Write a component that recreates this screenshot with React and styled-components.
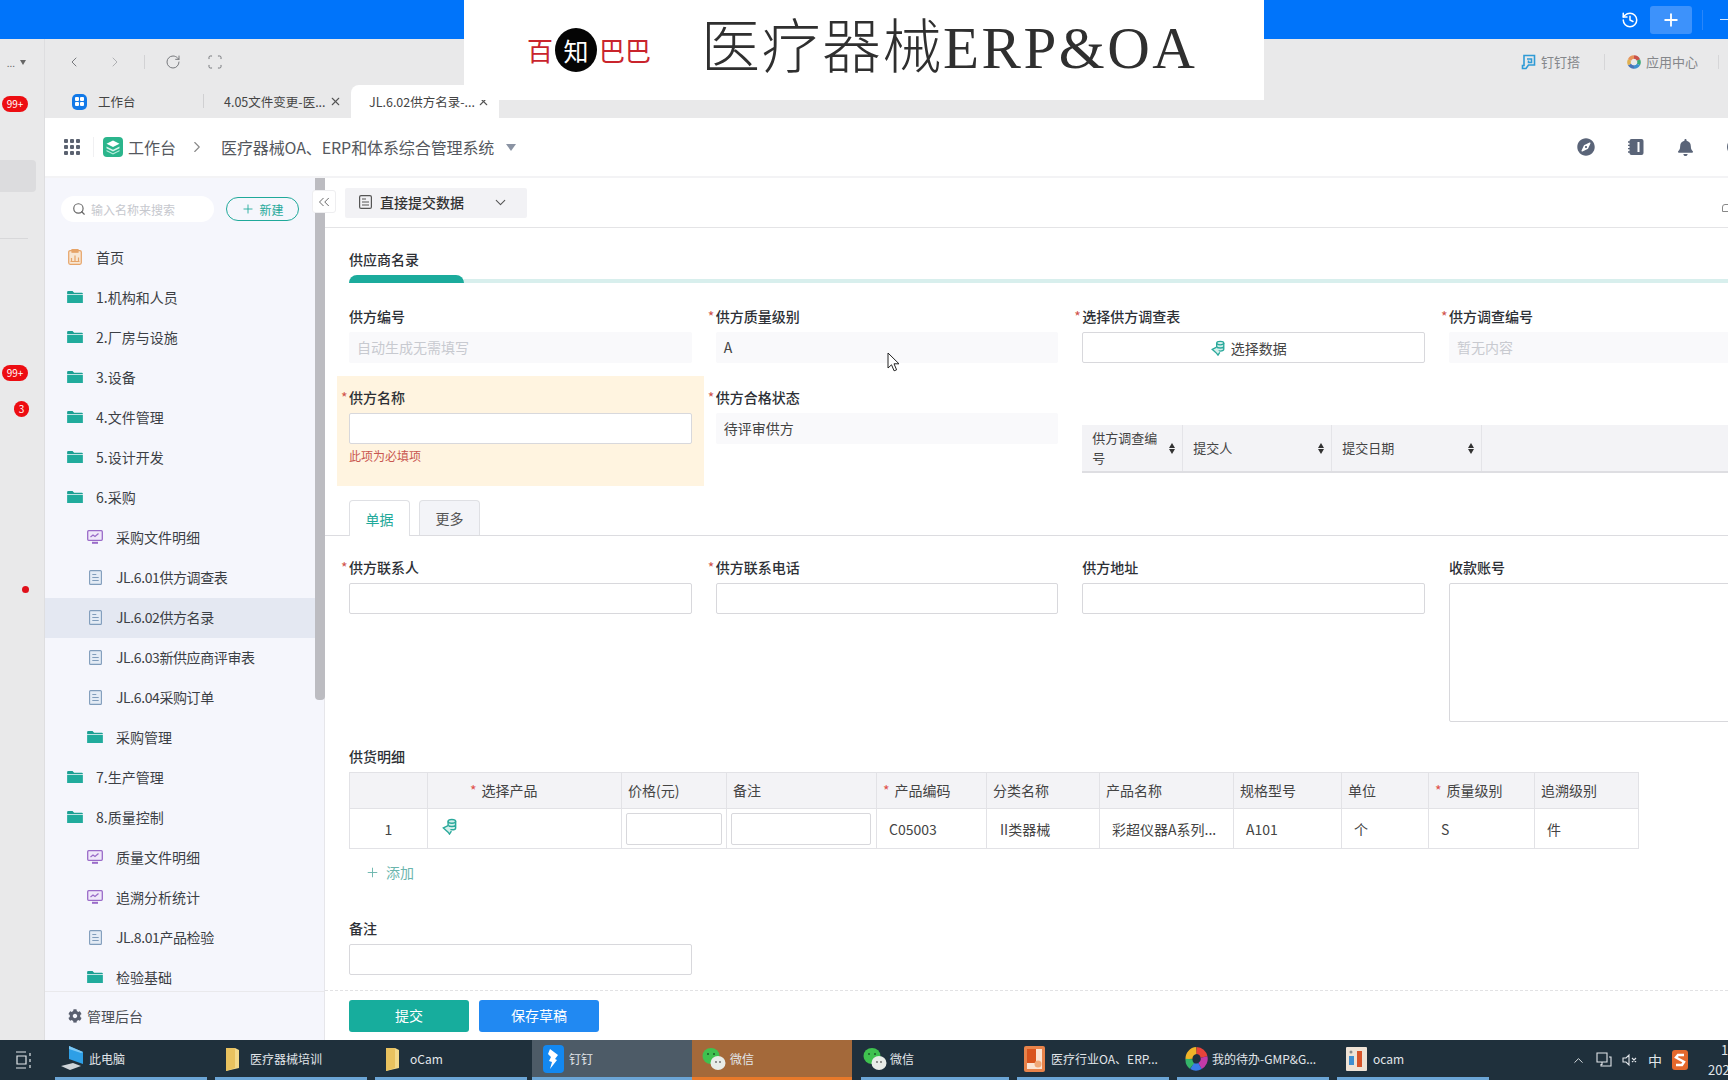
import React from "react";
import styled, { createGlobalStyle } from "styled-components";
import { ChevronLeft, ChevronRight, ChevronDown, ChevronsLeft, RotateCw, Scan, History, Plus, Search, X, ChevronUp } from "lucide-react";
import { FaCompass, FaBell, FaCog } from "react-icons/fa";

const GlobalStyle = createGlobalStyle`
  html, body { margin: 0; padding: 0; background: #fff; overflow: hidden; }
  * { box-sizing: border-box; }
  body { font-family: "Noto Sans CJK SC", "Noto Sans", sans-serif; color: #333; }
`;

const menu = [
  { type: "home", text: "首页" },
  { type: "folder", text: "1.机构和人员" },
  { type: "folder", text: "2.厂房与设施" },
  { type: "folder", text: "3.设备" },
  { type: "folder", text: "4.文件管理" },
  { type: "folder", text: "5.设计开发" },
  { type: "folder", text: "6.采购" },
  { type: "screen", text: "采购文件明细", child: true },
  { type: "doc", text: "JL.6.01供方调查表", child: true },
  { type: "doc", text: "JL.6.02供方名录", child: true, active: true },
  { type: "doc", text: "JL.6.03新供应商评审表", child: true },
  { type: "doc", text: "JL.6.04采购订单", child: true },
  { type: "folder", text: "采购管理", child: true },
  { type: "folder", text: "7.生产管理" },
  { type: "folder", text: "8.质量控制" },
  { type: "screen", text: "质量文件明细", child: true },
  { type: "screen", text: "追溯分析统计", child: true },
  { type: "doc", text: "JL.8.01产品检验", child: true },
  { type: "folder", text: "检验基础", child: true },
];

const columns = [
  { w: 78, title: "" },
  { w: 194, title: "选择产品", req: true, pad: 42 },
  { w: 105, title: "价格(元)" },
  { w: 150, title: "备注" },
  { w: 110, title: "产品编码", req: true },
  { w: 113, title: "分类名称" },
  { w: 134, title: "产品名称" },
  { w: 108, title: "规格型号" },
  { w: 87, title: "单位" },
  { w: 106, title: "质量级别", req: true },
  { w: 104, title: "追溯级别" },
];

const tasks = [
  { w: 152, text: "此电脑", icon: "pc", pad: 5, gap: 4 },
  { w: 152, text: "医疗器械培训", icon: "dir", pad: 9, gap: 10 },
  { w: 152, text: "oCam", icon: "dir", pad: 9, gap: 10 },
  { w: 160, text: "钉钉", icon: "ding", pad: 11, gap: 5, state: "gray" },
  { w: 160, text: "微信", icon: "wechat", pad: 10, gap: 4, state: "orange" },
  { w: 148, text: "微信", icon: "wechat", pad: 2, gap: 3 },
  { w: 152, text: "医疗行业OA、ERP...", icon: "ppt", pad: 7, gap: 6 },
  { w: 152, text: "我的待办-GMP&G...", icon: "wheel", pad: 8, gap: 4 },
  { w: 152, text: "ocam", icon: "cam", pad: 9, gap: 6 },
];

const Page = styled.div`
  position: relative;
  width: 1728px;
  height: 1080px;
  overflow: hidden;
  display: flex;
  flex-direction: column;
  font-size: 14px;
`;

const BlueBar = styled.div`
  height: 39px;
  flex: none;
  background: #0074fa;
  display: flex;
  align-items: center;
  justify-content: flex-end;
  color: #fff;
`;

const PlusBox = styled.div`
  width: 42px;
  height: 28px;
  margin-left: 11px;
  border-radius: 3px;
  background: #3d92fb;
  display: flex;
  align-items: center;
  justify-content: center;
`;

const BlueSep = styled.div`
  width: 1px;
  height: 20px;
  margin-left: 10px;
  background: #2a86f8;
`;

const MinusMark = styled.div`
  width: 8px;
  height: 1px;
  margin-left: 17px;
  background: #d6e8ff;
`;

const Middle = styled.div`
  flex: 1;
  min-height: 0;
  display: flex;
`;

const Rail = styled.div`
  width: 45px;
  flex: none;
  background: #e9e9ea;
  border-right: 1px solid #dedee0;
  display: flex;
  flex-direction: column;
  align-items: flex-start;
`;

const RailTop = styled.div`
  height: 46px;
  width: 100%;
  padding-right: 18px;
  display: flex;
  align-items: center;
  justify-content: flex-end;
  gap: 5px;
  font-size: 10px;
  color: #666;
`;

const Caret = styled.span`
  width: 0;
  height: 0;
  border-left: 3px solid transparent;
  border-right: 3px solid transparent;
  border-top: 5px solid ${(p) => p.$color || "#666"};
`;

const BigCaret = styled(Caret)`
  border-left-width: 5px;
  border-right-width: 5px;
  border-top-width: 7px;
`;

const Badge = styled.div`
  margin-top: ${(p) => p.$top}px;
  margin-left: ${(p) => p.$left}px;
  min-width: ${(p) => p.$w}px;
  height: 16px;
  border-radius: 8px;
  background: #ed0d12;
  color: #fff;
  font-size: 10px;
  line-height: 16px;
  text-align: center;
`;

const RailBlock = styled.div`
  width: 36px;
  height: 32px;
  margin-top: 48px;
  background: #dcdcde;
  border-radius: 0 4px 4px 0;
`;

const RailLine = styled.div`
  width: 28px;
  height: 1px;
  margin-top: 46px;
  background: #d8d8da;
`;

const RailDot = styled.div`
  width: 7px;
  height: 7px;
  margin-top: 169px;
  margin-left: 22px;
  border-radius: 50%;
  background: #e0101a;
`;

const Browser = styled.div`
  flex: 1;
  min-width: 0;
  display: flex;
  flex-direction: column;
`;

const NavBar = styled.div`
  height: 46px;
  flex: none;
  background: #e9e9ea;
  display: flex;
  align-items: center;
  padding-left: 21px;
  color: #77797d;
`;

const NavBtn = styled.div`
  width: ${(p) => p.$w || 16}px;
  margin-right: ${(p) => p.$mr || 0}px;
  display: flex;
  justify-content: center;
  opacity: ${(p) => (p.$dim ? 0.5 : 1)};
`;

const NavSep = styled.div`
  width: 1px;
  height: 14px;
  margin-right: 20px;
  background: #d2d2d4;
`;

const NavRight = styled.div`
  margin-left: auto;
  display: flex;
  align-items: center;
  font-size: 13px;
  color: #85878b;
`;

const NavLink = styled.div`
  display: flex;
  align-items: center;
  gap: 5px;
  padding-right: ${(p) => p.$pr}px;
  margin-right: ${(p) => p.$mr}px;
  border-right: 1px solid #d6d6d8;
  line-height: 14px;
`;

const TabBar = styled.div`
  height: 33px;
  flex: none;
  background: #e9e9ea;
  display: flex;
  align-items: stretch;
  padding-left: 27px;
  font-size: 12.5px;
  color: #444;
`;

const Tab = styled.div`
  width: ${(p) => p.$w}px;
  flex: none;
  display: flex;
  align-items: center;
  padding-left: ${(p) => p.$pl}px;
  background: ${(p) => (p.$active ? "#fff" : "transparent")};
  border-radius: ${(p) => (p.$active ? "8px 8px 0 0" : "0")};
  white-space: nowrap;
  svg.close {
    margin-left: auto;
    margin-right: ${(p) => p.$cr || 0}px;
    color: #555;
  }
`;

const TabSep = styled.div`
  width: 1px;
  height: 14px;
  margin: 9px 20px 0 0;
  background: #d0d0d2;
`;

const TabIconBox = styled.div`
  width: 15px;
  height: 16px;
  margin-right: 11px;
  border-radius: 5px;
  background: #1279e8;
  display: grid;
  grid-template-columns: 4px 4px;
  gap: 1px;
  align-content: center;
  justify-content: center;
  i {
    display: block;
    width: 4px;
    height: 4px;
    border-radius: 1px;
    background: #fff;
  }
`;

const AppHeader = styled.div`
  height: 60px;
  flex: none;
  background: #fff;
  border-bottom: 2px solid #f3f3f5;
  display: flex;
  align-items: center;
  padding-left: 19px;
  color: #55585e;
  font-size: 16px;
`;

const DotGrid = styled.div`
  width: 16px;
  height: 16px;
  display: grid;
  grid-template-columns: repeat(3, 4px);
  grid-auto-rows: 4px;
  gap: 2px;
  i {
    background: #5b6270;
    border-radius: 1px;
  }
`;

const HeaderSep = styled.div`
  width: 1px;
  height: 20px;
  margin: 0 9px 0 13px;
  background: #f0f0f2;
`;

const AppTitle = styled.span`
  margin-left: 5px;
  white-space: nowrap;
`;

const Crumb = styled.span`
  margin-left: 12px;
  display: flex;
  color: #888;
`;

const SysTitle = styled.span`
  margin-left: 15px;
  margin-right: 12px;
  white-space: nowrap;
  letter-spacing: -0.1px;
`;

const HeaderIcons = styled.div`
  margin-left: auto;
  margin-right: -17px;
  display: flex;
  align-items: center;
  gap: 33px;
  color: #5a6478;
`;

const PartCircle = styled.div`
  width: 18px;
  height: 18px;
  border-radius: 50%;
  border: 3px solid #5a6478;
`;

const Body = styled.div`
  position: relative;
  flex: 1;
  min-height: 0;
  display: flex;
`;

const Sidebar = styled.div`
  width: 280px;
  flex: none;
  background: #f5f6fc;
  border-right: 1px solid #e6e6ea;
  display: flex;
  flex-direction: column;
`;

const SideMain = styled.div`
  flex: 1;
  min-height: 0;
  display: flex;
`;

const SideInner = styled.div`
  width: 270px;
  flex: none;
  overflow: hidden;
  display: flex;
  flex-direction: column;
`;

const ScrollTrack = styled.div`
  width: 10px;
  flex: none;
`;

const ScrollThumb = styled.div`
  width: 10px;
  height: 522px;
  background: #bcbcc1;
  border-radius: 0 0 4px 4px;
`;

const SearchRow = styled.div`
  height: 60px;
  flex: none;
  display: flex;
  align-items: flex-start;
  padding: 18px 0 0 16px;
`;

const SearchBox = styled.div`
  width: 153px;
  height: 26px;
  background: #fff;
  border-radius: 13px;
  display: flex;
  align-items: center;
  gap: 5px;
  padding-left: 11px;
  font-size: 12px;
  color: #c6c8ce;
  svg {
    color: #666;
  }
`;

const NewButton = styled.div`
  width: 73px;
  height: 24px;
  margin: 1px 0 0 12px;
  border: 1px solid #1fa99a;
  border-radius: 12px;
  color: #1fa99a;
  font-size: 12px;
  display: flex;
  align-items: center;
  justify-content: center;
  gap: 4px;
`;

const MenuRow = styled.div`
  height: 40px;
  flex: none;
  display: flex;
  align-items: center;
  padding: 0 0 2px ${(p) => (p.$child ? 42 : 22)}px;
  background: ${(p) => (p.$active ? "#e4e8f2" : "transparent")};
  color: #3c3f45;
  white-space: nowrap;
  letter-spacing: ${(p) => (p.$tight ? "-0.4px" : "0")};
`;

const MenuIcon = styled.div`
  width: 16px;
  margin-right: 13px;
  display: flex;
  justify-content: center;
`;

const SideFooter = styled.div`
  height: 49px;
  flex: none;
  border-top: 1px solid #e9e9ec;
  display: flex;
  align-items: center;
  gap: 5px;
  padding: 0 0 0 23px;
  color: #4a4d54;
  font-size: 14px;
  svg {
    color: #5a6070;
  }
`;

const CollapseBtn = styled.div`
  position: absolute;
  left: 267px;
  top: 12px;
  width: 24px;
  height: 23px;
  background: #fff;
  border: 1px solid #eeeef0;
  border-radius: 3px;
  display: flex;
  align-items: center;
  justify-content: center;
  color: #666;
`;

const Main = styled.div`
  flex: 1;
  min-width: 0;
  background: #fff;
  overflow: hidden;
  display: flex;
  flex-direction: column;
`;

const MainBar = styled.div`
  height: 50px;
  flex: none;
  border-bottom: 1px solid #e4e4e6;
  padding: 10px 0 0 20px;
  display: flex;
  align-items: flex-start;
`;

const SubmitSelect = styled.div`
  width: 182px;
  height: 30px;
  background: #f2f2f5;
  border-radius: 2px;
  display: flex;
  align-items: center;
  padding: 0 18px 2px 14px;
  gap: 8px;
  font-size: 14px;
  font-weight: 500;
  color: #333;
  svg.chev {
    margin-left: auto;
    color: #555;
  }
`;

const BarTail = styled.div`
  margin-left: auto;
  margin-right: -6px;
  margin-top: 16px;
  width: 12px;
  height: 8px;
  border: 1px solid #888;
  border-radius: 3px 3px 0 0;
`;

const FormScroll = styled.div`
  flex: 1;
  min-height: 0;
  overflow: hidden;
`;

const SectionTitle = styled.div`
  margin: 22px 0 0 24px;
  height: 20px;
  line-height: 18px;
  font-weight: 500;
  color: #2d3036;
`;

const Progress = styled.div`
  height: 8px;
  margin: 5px 0 0 24px;
  display: flex;
  align-items: flex-end;
`;

const ProgressFill = styled.div`
  width: 115px;
  height: 8px;
  flex: none;
  background: #1bab9c;
  border-radius: 8px 8px 0 0;
`;

const ProgressTrack = styled.div`
  flex: 1;
  height: 4px;
  background: #d8efed;
`;

const FormGrid = styled.div`
  margin: ${(p) => p.$top || 0}px 0 0 12px;
  width: 1467px;
  display: grid;
  grid-template-columns: repeat(4, 366.67px);
`;

const Cell = styled.div`
  padding: 12px 12px ${(p) => (p.$tall ? 0 : 13)}px;
  min-height: ${(p) => p.$min || 0}px;
  background: ${(p) => (p.$warn ? "#fff4e0" : "transparent")};
  grid-column: ${(p) => p.$span || "auto"};
`;

const Label = styled.div`
  height: 20px;
  line-height: 18px;
  font-size: 14px;
  font-weight: 500;
  color: #2d3036;
  white-space: nowrap;
`;

const Star = styled.span`
  display: inline-block;
  width: 8px;
  margin-left: -8px;
  color: #d0524a;
  font-weight: 400;
`;

const Field = styled.div`
  height: ${(p) => p.$h || 31}px;
  margin-top: 5px;
  border-radius: 2px;
  border: 1px solid ${(p) => (p.$read ? "#f9f9fb" : "#d8d8dc")};
  background: ${(p) => (p.$read ? "#f9f9fb" : "#fff")};
  color: ${(p) => (p.$ph ? "#c8cad0" : "#444")};
  font-size: 14px;
  line-height: 29px;
  padding-left: 7px;
`;

const PickField = styled(Field)`
  display: flex;
  align-items: center;
  justify-content: center;
  gap: 5px;
  padding: 0 11px 0 0;
  line-height: 1;
`;

const ErrorText = styled.div`
  margin-top: 2px;
  line-height: 20px;
  font-size: 12px;
  color: #c9574f;
`;

const MiniHead = styled.div`
  margin: 37px 0 0 0;
  width: 700px;
  height: 48px;
  display: grid;
  grid-template-columns: 101px 149px 150px 1fr;
  background: #f3f3f6;
  border-bottom: 2px solid #dedee2;
  font-size: 13px;
  color: #444;
`;

const MiniCol = styled.div`
  display: flex;
  align-items: center;
  justify-content: space-between;
  padding: 0 7px 0 ${(p) => p.$pl}px;
  border-right: 1px solid #e4e4e8;
  line-height: 20px;
`;

const SortMark = styled.div`
  display: flex;
  flex: none;
  flex-direction: column;
  align-items: center;
  gap: 1px;
  i {
    width: 0;
    height: 0;
    border-left: 3.5px solid transparent;
    border-right: 3.5px solid transparent;
  }
  i:first-child {
    border-bottom: 5px solid #333;
  }
  i:last-child {
    border-top: 5px solid #333;
  }
`;

const TabsRow = styled.div`
  height: 36px;
  margin-top: 14px;
  padding-left: 24px;
  border-bottom: 1px solid #dcdce0;
  display: flex;
  gap: 9px;
`;

const FormTab = styled.div`
  width: 61px;
  height: ${(p) => (p.$on ? 36 : 35)}px;
  background: ${(p) => (p.$on ? "#fff" : "#f3f4f8")};
  border: 1px solid #dfe0e4;
  border-bottom: none;
  border-radius: 4px 4px 0 0;
  color: ${(p) => (p.$on ? "#1fa99a" : "#555")};
  font-size: 14px;
  display: flex;
  align-items: center;
  justify-content: center;
`;

const DetailBlock = styled.div`
  margin: 25px 0 0 24px;
`;

const DetailTable = styled.table`
  margin-top: 5px;
  width: 1289px;
  table-layout: fixed;
  border-collapse: collapse;
  font-size: 14px;
  color: #444;
`;

const Th = styled.th`
  height: 36px;
  padding: 0 0 2px ${(p) => p.$pad || 6}px;
  background: #f3f3f6;
  border: 1px solid #e2e2e6;
  font-weight: 400;
  text-align: left;
  white-space: nowrap;
`;

const ThStar = styled.span`
  color: #e0504a;
  margin-right: 5px;
`;

const Td = styled.td`
  height: 40px;
  padding: 0 ${(p) => p.$padr || 0}px 0 ${(p) => p.$pad ?? 12}px;
  border: 1px solid #e2e2e6;
  text-align: ${(p) => (p.$center ? "center" : "left")};
  white-space: nowrap;
  overflow: hidden;
`;

const CellInput = styled.div`
  height: 32px;
  background: #fff;
  border: 1px solid #d8d8dc;
  border-radius: 2px;
`;

const AddRow = styled.div`
  height: 24px;
  margin-top: 11px;
  padding-left: 16px;
  display: flex;
  align-items: center;
  gap: 6px;
  color: #6bb5ad;
  font-size: 14px;
`;

const Footer = styled.div`
  height: 50px;
  flex: none;
  border-top: 1px dashed #e2e2e4;
  padding: 9px 0 0 24px;
  display: flex;
  align-items: flex-start;
  gap: 10px;
`;

const ActionBtn = styled.div`
  width: 120px;
  height: 32px;
  padding-bottom: 2px;
  border-radius: 3px;
  background: ${(p) => p.$bg};
  color: #fff;
  font-size: 14px;
  display: flex;
  align-items: center;
  justify-content: center;
`;

const Taskbar = styled.div`
  height: 40px;
  flex: none;
  background: #1f303c;
  display: flex;
  align-items: stretch;
  padding-left: 55px;
  position: relative;
  color: #e2e6ea;
  font-size: 12px;
`;

const StartIcon = styled.div`
  position: absolute;
  left: 16px;
  top: 11px;
`;

const TaskItem = styled.div`
  width: ${(p) => p.$w}px;
  flex: none;
  margin-right: ${(p) => (p.$state === "gray" ? 0 : p.$state === "orange" ? 9 : 8)}px;
  margin-left: ${(p) => (p.$state === "gray" ? -3 : 0)}px;
  padding-left: ${(p) => p.$pad}px;
  gap: ${(p) => p.$gap}px;
  display: flex;
  align-items: center;
  white-space: nowrap;
  background: ${(p) => (p.$state === "gray" ? "#4d5b67" : p.$state === "orange" ? "#a4693a" : "transparent")};
  border-bottom: 3px solid ${(p) => (p.$state === "orange" ? "#e8792a" : "#6ba5d6")};
`;

const Tray = styled.div`
  margin-left: auto;
  display: flex;
  align-items: center;
  gap: 10px;
  font-size: 14px;
`;

const Clock = styled.div`
  width: 20px;
  overflow: hidden;
  font-size: 13px;
  line-height: 20px;
  margin-left: 10px;
  white-space: nowrap;
`;

const ClockHour = styled.div`
  padding-left: 13px;
`;

const Banner = styled.div`
  position: absolute;
  left: 464px;
  top: 0;
  width: 800px;
  height: 100px;
  background: #fff;
  display: flex;
  align-items: center;
  padding-left: 63px;
`;

const LogoRed = styled.span`
  color: #c9242c;
  font-size: 26px;
  line-height: 1;
`;

const LogoCircle = styled.span`
  width: 42px;
  height: 44px;
  margin: 0 2px;
  border-radius: 50%;
  background: #050505;
  color: #fff;
  font-size: 25px;
  display: flex;
  align-items: center;
  justify-content: center;
`;

const BannerTitle = styled.div`
  margin-left: 50px;
  margin-top: -4px;
  font-family: "Liberation Serif", "Noto Sans CJK SC", serif;
  font-size: 59px;
  line-height: 1;
  font-weight: 300;
  color: #2f2f2f;
  white-space: nowrap;
  letter-spacing: 1.5px;
`;

const BannerLatin = styled.span`
  letter-spacing: 2.5px;
`;

const CursorMark = styled.svg`
  position: absolute;
  left: 887px;
  top: 352px;
`;

function FolderIcon({ size = 16 }) {
  return (
    <svg width={size} height={size * 0.8} viewBox="0 0 16 13">
      <path d="M0 1.2C0 .5.5 0 1.2 0h4.3l1.6 1.8H15c.6 0 1 .4 1 1V3H0z" fill="#1a9f92" />
      <path d="M0 3.8h16v8c0 .7-.5 1.2-1.2 1.2H1.2C.5 13 0 12.500 0 11.800z" fill="#20ab9c" />
    </svg>
  );
}

function DocIcon() {
  return (
    <svg width="13" height="15" viewBox="0 0 13 15" fill="#e3ebf5" stroke="#7f9cbb" strokeWidth="1.100">
      <rect x=".6" y=".6" width="11.800" height="13.800" rx="1" />
      <path d="M3.300 4.500h4M3.300 7.500h6.400M3.300 10.500h6.400" fill="none" />
    </svg>
  );
}

function ScreenIcon() {
  return (
    <svg width="16" height="14" viewBox="0 0 16 14" fill="none" stroke="#9a6bc8" strokeWidth="1.300">
      <rect x=".7" y=".7" width="14.600" height="9.600" rx="1" fill="#f0e8fa" />
      <path d="M3.500 7l2.500-2 2 1.500L11.500 3.500" />
      <path d="M5 12.800h6" strokeWidth="2" />
    </svg>
  );
}

function HomeIcon() {
  return (
    <svg width="14" height="16" viewBox="0 0 14 16" fill="#f8e6d2" stroke="#e6a468" strokeWidth="1.200">
      <rect x=".7" y="1.600" width="12.600" height="13.700" rx="1.500" />
      <rect x="4" y=".6" width="6" height="2.600" fill="#e6a468" />
      <path d="M3.500 12V9M7 12V6.500M10.500 12V8.500M2.500 12.500h9" />
    </svg>
  );
}

function MenuGlyph({ type }) {
  if (type === "folder") return <FolderIcon />;
  if (type === "doc") return <DocIcon />;
  if (type === "screen") return <ScreenIcon />;
  return <HomeIcon />;
}

function PickIcon({ size = 15 }) {
  return (
    <svg width={size} height={size} viewBox="0 0 16 18" fill="none" stroke="#2aa99b" strokeWidth="1.500">
      <path d="M6.500 3.500v7c0 1 1.800 2 4 2s4-1 4-2v-7M6.500 7c0 1 1.800 2 4 2s4-1 4-2" fill="#d5f0ec" />
      <ellipse cx="10.500" cy="3.500" rx="4" ry="2" fill="#d5f0ec" />
      <path d="M6.500 8L1.500 10.500l5 4.500 1.500 2 2-3" fill="#d5f0ec" />
    </svg>
  );
}

function AppLogo() {
  return (
    <svg width="20" height="20" viewBox="0 0 20 20">
      <rect width="20" height="20" rx="4" fill="#2bb58c" />
      <path d="M10 3.500l6.500 3.200L10 10 3.500 6.700z" fill="#fff" />
      <path d="M3.500 9.500L10 12.800l6.500-3.300v1.800L10 14.500l-6.500-3.200z" fill="#d8f5ec" />
      <path d="M3.500 13L10 16.200 16.500 13v1.300L10 17.500l-6.500-3.200z" fill="#b8ecdc" />
    </svg>
  );
}

function NotebookIcon() {
  return (
    <svg width="16" height="16" viewBox="0 0 16 16">
      <rect x="1.500" width="14" height="16" rx="2" fill="#5a6478" />
      <rect x="9.500" y="3" width="2" height="10" fill="#fff" />
      <path d="M0 3h3M0 6.300h3M0 9.600h3M0 13h3" stroke="#5a6478" strokeWidth="1.300" />
    </svg>
  );
}

function DabIcon() {
  return (
    <svg width="15" height="16" viewBox="0 0 15 16" fill="none" stroke="#2f9bd6" strokeWidth="1.600">
      <path d="M3 1.500h10.500v9.500H7.500L5 14.500H1.500v-3H3z" />
      <path d="M6 5h4.500v3.500H7.500V6.500" />
    </svg>
  );
}

function CenterIcon() {
  return (
    <svg width="14" height="14" viewBox="0 0 14 14" fill="none" strokeWidth="3.500">
      <path d="M2.500 5A5 5 0 0 1 7 2" stroke="#e8945a" />
      <path d="M7 2a5 5 0 0 1 4.500 3" stroke="#c9524a" />
      <path d="M11.500 5a5 5 0 0 1 0 4.500" stroke="#3aa878" />
      <path d="M11.500 9.500A5 5 0 0 1 7 12" stroke="#3f8fd0" />
      <path d="M7 12a5 5 0 0 1-4.500-2.500" stroke="#4a74b8" />
      <path d="M2.500 9.500a5 5 0 0 1 0-4.500" stroke="#e0b050" />
    </svg>
  );
}

function TaskIcon({ kind }) {
  if (kind === "pc") {
    return (
      <svg width="25" height="27" viewBox="0 0 25 27">
        <path d="M9 1l14 6v12L9 14z" fill="#2e9fe6" />
        <path d="M9 1l14 6-2 1L9 4z" fill="#7cc8f5" />
        <path d="M1 21l12-3 8 3-11 4z" fill="#cfd5da" />
      </svg>
    );
  }
  if (kind === "dir") {
    return (
      <svg width="16" height="26" viewBox="0 0 16 26">
        <path d="M2 2h9l4 2v18l-13 3z" fill="#f4d98a" />
        <path d="M2 2h9v20l-9 3z" fill="#e9c25f" />
      </svg>
    );
  }
  if (kind === "ding") {
    return (
      <svg width="21" height="28" viewBox="0 0 21 28">
        <rect width="21" height="28" rx="4" fill="#1388f0" />
        <path d="M7 4l8 6-3 4 2 1-7 9 2-7-3-1 2-4-3-3z" fill="#fff" />
      </svg>
    );
  }
  if (kind === "wechat") {
    return (
      <svg width="24" height="24" viewBox="0 0 24 24">
        <ellipse cx="9" cy="9" rx="8.500" ry="8" fill="#3fc24f" />
        <ellipse cx="16" cy="16" rx="7.500" ry="7" fill="#e8ece8" />
        <circle cx="6" cy="7" r="1" fill="#1d5a28" />
        <circle cx="12" cy="7" r="1" fill="#1d5a28" />
        <circle cx="14" cy="15" r=".9" fill="#666" />
        <circle cx="18" cy="15" r=".9" fill="#666" />
      </svg>
    );
  }
  if (kind === "ppt") {
    return (
      <svg width="21" height="26" viewBox="0 0 21 26">
        <rect width="21" height="26" rx="2" fill="#e8834a" />
        <rect x="3" y="3" width="15" height="20" fill="#fbe3d2" />
        <rect x="3" y="3" width="9" height="14" fill="#d9541e" />
        <circle cx="14" cy="18" r="3.500" fill="#f0a878" />
      </svg>
    );
  }
  if (kind === "wheel") {
    return (
      <svg width="23" height="26" viewBox="0 0 23 26" fill="none" strokeWidth="7">
        <path d="M4 13A8 8 0 0 1 11.500 4.500" stroke="#f0b429" />
        <path d="M11.500 4.500A8 8 0 0 1 19 11" stroke="#e8433a" />
        <path d="M19 11a8 8 0 0 1-4 9" stroke="#c23aa8" />
        <path d="M15 20a8 8 0 0 1-8 0" stroke="#3a7be8" />
        <path d="M7 20a8 8 0 0 1-3-7" stroke="#35b56a" />
      </svg>
    );
  }
  return (
    <svg width="21" height="24" viewBox="0 0 21 24">
      <rect width="21" height="24" rx="1" fill="#efe3d6" />
      <rect x="11" y="4" width="5" height="16" fill="#d8552a" />
      <rect x="3" y="9" width="5" height="9" fill="#3f8fd0" />
      <circle cx="5" cy="5" r="1.500" fill="#8a8a8a" />
    </svg>
  );
}

function SortIcon() {
  return (
    <SortMark>
      <i />
      <i />
    </SortMark>
  );
}

function FieldLabel({ req, children }) {
  return (
    <Label>
      {req && <Star>*</Star>}
      {children}
    </Label>
  );
}

export default function App() {
  return (
    <Page>
      <GlobalStyle />
      <BlueBar>
        <History size={18} strokeWidth={2} />
        <PlusBox>
          <Plus size={20} strokeWidth={2.200} />
        </PlusBox>
        <BlueSep />
        <MinusMark />
      </BlueBar>

      <Middle>
        <Rail>
          <RailTop>
            <span>...</span>
            <Caret />
          </RailTop>
          <Badge $top={11} $left={2} $w={26}>99+</Badge>
          <RailBlock />
          <RailLine />
          <Badge $top={126} $left={2} $w={26}>99+</Badge>
          <Badge $top={20} $left={14} $w={15}>3</Badge>
          <RailDot />
        </Rail>

        <Browser>
          <NavBar>
            <NavBtn $mr={25}><ChevronLeft size={20} strokeWidth={1.500} /></NavBtn>
            <NavBtn $mr={21} $dim><ChevronRight size={20} strokeWidth={1.500} /></NavBtn>
            <NavSep />
            <NavBtn $mr={26}><RotateCw size={16} strokeWidth={1.500} /></NavBtn>
            <NavBtn><Scan size={16} strokeWidth={1.500} /></NavBtn>
            <NavRight>
              <NavLink $pr={24} $mr={22}>
                <DabIcon />
                钉钉搭
              </NavLink>
              <NavLink $pr={20} $mr={9}>
                <CenterIcon />
                应用中心
              </NavLink>
            </NavRight>
          </NavBar>

          <TabBar>
            <Tab $w={131} $pl={0}>
              <TabIconBox><i /><i /><i /><i /></TabIconBox>
              工作台
            </Tab>
            <TabSep />
            <Tab $w={127} $pl={0} $cr={9}>
              4.05文件变更-医...
              <X className="close" size={13} />
            </Tab>
            <Tab $w={148} $pl={18} $cr={9} $active>
              JL.6.02供方名录-...
              <X className="close" size={13} />
            </Tab>
          </TabBar>

          <AppHeader>
            <DotGrid>
              {Array.from({ length: 9 }).map((_, i) => <i key={i} />)}
            </DotGrid>
            <HeaderSep />
            <AppLogo />
            <AppTitle>工作台</AppTitle>
            <Crumb><ChevronRight size={18} strokeWidth={1.500} /></Crumb>
            <SysTitle>医疗器械OA、ERP和体系综合管理系统</SysTitle>
            <BigCaret $color="#8a93a3" />
            <HeaderIcons>
              <FaCompass size={18} />
              <NotebookIcon />
              <FaBell size={17} />
              <PartCircle />
            </HeaderIcons>
          </AppHeader>

          <Body>
            <Sidebar>
              <SideMain>
                <SideInner>
                  <SearchRow>
                    <SearchBox>
                      <Search size={14} />
                      输入名称来搜索
                    </SearchBox>
                    <NewButton>
                      <Plus size={14} strokeWidth={1.500} />
                      新建
                    </NewButton>
                  </SearchRow>
                  {menu.map((m) => (
                    <MenuRow key={m.text} $child={m.child} $active={m.active} $tight={m.type === "doc"}>
                      <MenuIcon><MenuGlyph type={m.type} /></MenuIcon>
                      {m.text}
                    </MenuRow>
                  ))}
                </SideInner>
                <ScrollTrack><ScrollThumb /></ScrollTrack>
              </SideMain>
              <SideFooter>
                <FaCog size={14} />
                管理后台
              </SideFooter>
            </Sidebar>

            <CollapseBtn><ChevronsLeft size={18} strokeWidth={1.300} /></CollapseBtn>

            <Main>
              <MainBar>
                <SubmitSelect>
                  <svg width="13" height="14" viewBox="0 0 13 14" fill="none" stroke="#555" strokeWidth="1.200">
                    <rect x=".6" y=".6" width="11.800" height="12.800" rx="1.500" />
                    <path d="M3 4h4M3 7h7M3 10h7" />
                  </svg>
                  直接提交数据
                  <ChevronDown className="chev" size={17} strokeWidth={1.500} />
                </SubmitSelect>
                <BarTail />
              </MainBar>

              <FormScroll>
                <SectionTitle>供应商名录</SectionTitle>
                <Progress>
                  <ProgressFill />
                  <ProgressTrack />
                </Progress>

                <FormGrid $top={12}>
                  <Cell>
                    <FieldLabel>供方编号</FieldLabel>
                    <Field $read $ph>自动生成无需填写</Field>
                  </Cell>
                  <Cell>
                    <FieldLabel req>供方质量级别</FieldLabel>
                    <Field $read>A</Field>
                  </Cell>
                  <Cell>
                    <FieldLabel req>选择供方调查表</FieldLabel>
                    <PickField>
                      <PickIcon size={16} />
                      选择数据
                    </PickField>
                  </Cell>
                  <Cell>
                    <FieldLabel req>供方调查编号</FieldLabel>
                    <Field $read $ph>暂无内容</Field>
                  </Cell>

                  <Cell $warn $min={110}>
                    <FieldLabel req>供方名称</FieldLabel>
                    <Field />
                    <ErrorText>此项为必填项</ErrorText>
                  </Cell>
                  <Cell>
                    <FieldLabel req>供方合格状态</FieldLabel>
                    <Field $read>待评审供方</Field>
                  </Cell>
                  <Cell $span="3 / 5">
                    <MiniHead>
                      <MiniCol $pl={10}>
                        <span>供方调查编号</span>
                        <SortIcon />
                      </MiniCol>
                      <MiniCol $pl={10}>
                        提交人
                        <SortIcon />
                      </MiniCol>
                      <MiniCol $pl={10}>
                        提交日期
                        <SortIcon />
                      </MiniCol>
                      <div />
                    </MiniHead>
                  </Cell>
                </FormGrid>

                <TabsRow>
                  <FormTab $on>单据</FormTab>
                  <FormTab>更多</FormTab>
                </TabsRow>

                <FormGrid $top={10}>
                  <Cell $tall>
                    <FieldLabel req>供方联系人</FieldLabel>
                    <Field />
                  </Cell>
                  <Cell $tall>
                    <FieldLabel req>供方联系电话</FieldLabel>
                    <Field />
                  </Cell>
                  <Cell $tall>
                    <FieldLabel>供方地址</FieldLabel>
                    <Field />
                  </Cell>
                  <Cell $tall>
                    <FieldLabel>收款账号</FieldLabel>
                    <Field $h={139} />
                  </Cell>
                </FormGrid>

                <DetailBlock>
                  <Label>供货明细</Label>
                  <DetailTable>
                    <colgroup>
                      {columns.map((c, i) => <col key={i} width={c.w} />)}
                    </colgroup>
                    <thead>
                      <tr>
                        {columns.map((c, i) => (
                          <Th key={i} $pad={c.pad}>
                            {c.req && <ThStar>*</ThStar>}
                            {c.title}
                          </Th>
                        ))}
                      </tr>
                    </thead>
                    <tbody>
                      <tr>
                        <Td $center $pad={0}>1</Td>
                        <Td $pad={13}><PickIcon size={17} /></Td>
                        <Td $pad={4} $padr={4}><CellInput /></Td>
                        <Td $pad={4} $padr={5}><CellInput /></Td>
                        <Td>C05003</Td>
                        <Td $pad={13}>II类器械</Td>
                        <Td>彩超仪器A系列...</Td>
                        <Td>A101</Td>
                        <Td>个</Td>
                        <Td>S</Td>
                        <Td>件</Td>
                      </tr>
                    </tbody>
                  </DetailTable>
                  <AddRow>
                    <Plus size={15} strokeWidth={1.500} />
                    添加
                  </AddRow>
                </DetailBlock>

                <FormGrid $top={23}>
                  <Cell>
                    <FieldLabel>备注</FieldLabel>
                    <Field />
                  </Cell>
                </FormGrid>
              </FormScroll>

              <Footer>
                <ActionBtn $bg="#17ad9d">提交</ActionBtn>
                <ActionBtn $bg="#2189f2">保存草稿</ActionBtn>
              </Footer>
            </Main>
          </Body>
        </Browser>
      </Middle>

      <Taskbar>
        <StartIcon>
          <svg width="16" height="18" viewBox="0 0 16 18" fill="none" stroke="#e2e6ea" strokeWidth="1.200">
            <path d="M0 1h10M0 17h10M1 5h9v8H1zM14 2v3M14 8v3M14 14v3" />
          </svg>
        </StartIcon>
        {tasks.map((t, i) => (
          <TaskItem key={i} $w={t.w} $pad={t.pad} $gap={t.gap} $state={t.state}>
            <TaskIcon kind={t.icon} />
            {t.text}
          </TaskItem>
        ))}
        <Tray>
          <ChevronUp size={15} strokeWidth={1.500} />
          <svg width="16" height="16" viewBox="0 0 16 16" fill="none" stroke="#e2e6ea" strokeWidth="1.100">
            <path d="M1 1h10v9H1zM13 5h2v9H5v-2M6 10v3" />
          </svg>
          <svg width="16" height="14" viewBox="0 0 16 14" fill="none" stroke="#e2e6ea" strokeWidth="1.100">
            <path d="M1 5h3l3-3v10L4 9H1zM10 5l4 4M14 5l-4 4" />
          </svg>
          <span>中</span>
          <svg width="16" height="20" viewBox="0 0 16 20">
            <rect width="16" height="20" rx="3" fill="#e4682c" />
            <path d="M12 5H6L4 7.500 12 12l-2 3H4" fill="none" stroke="#fff" strokeWidth="2.500" />
          </svg>
          <Clock>
            <ClockHour>17</ClockHour>
            202
          </Clock>
        </Tray>
      </Taskbar>

      <Banner>
        <LogoRed>百</LogoRed>
        <LogoCircle>知</LogoCircle>
        <LogoRed>巴巴</LogoRed>
        <BannerTitle>医疗器械<BannerLatin>ERP&amp;OA</BannerLatin></BannerTitle>
      </Banner>

      <CursorMark width="14" height="20" viewBox="0 0 14 20">
        <path d="M1 1v15l3.500-3.200 2.600 6 2.500-1-2.600-6H12z" fill="#fff" stroke="#222" strokeWidth="1" />
      </CursorMark>
    </Page>
  );
}
